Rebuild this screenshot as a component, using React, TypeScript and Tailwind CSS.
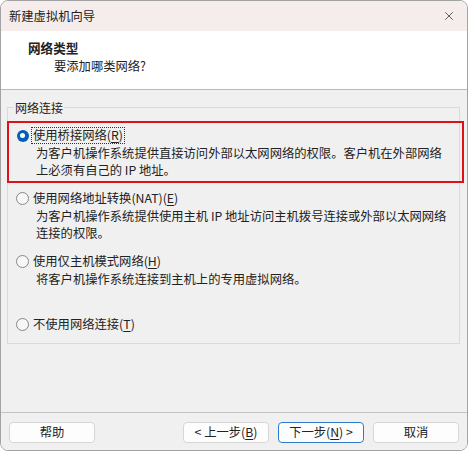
import { X } from "lucide-react";

const font = { fontFamily: '"Noto Sans CJK SC", "Noto Sans", sans-serif' };

type Opt = {
  label: string;
  key: string;
  desc: string[];
  selected?: boolean;
};

const options: Opt[] = [
  {
    label: "使用桥接网络",
    key: "R",
    desc: [
      "为客户机操作系统提供直接访问外部以太网网络的权限。客户机在外部网络",
      "上必须有自己的 IP 地址。",
    ],
    selected: true,
  },
  {
    label: "使用网络地址转换(NAT)",
    key: "E",
    desc: [
      "为客户机操作系统提供使用主机 IP 地址访问主机拨号连接或外部以太网网络",
      "连接的权限。",
    ],
  },
  {
    label: "使用仅主机模式网络",
    key: "H",
    desc: ["将客户机操作系统连接到主机上的专用虚拟网络。"],
  },
  { label: "不使用网络连接", key: "T", desc: [] },
];

function Radio({ on }: { on?: boolean }) {
  if (on) {
    return (
      <span className="flex h-[13px] w-[13px] items-center justify-center">
        <span className="flex h-[12px] w-[12px] items-center justify-center rounded-full bg-[#005fb8]">
          <span className="h-[5px] w-[5px] rounded-full bg-white" />
        </span>
      </span>
    );
  }
  return <span className="h-[13px] w-[13px] rounded-full border border-[#878787] bg-[#f7f7f7]" />;
}

function Option({ opt }: { opt: Opt }) {
  return (
    <div className="h-[63px]">
      <div className="flex h-[17px] items-center">
        <Radio on={opt.selected} />
        <span
          className={`ml-[2px] px-[1px] leading-[15px] ${
            opt.selected ? "border border-dotted border-[#333]" : "border border-transparent"
          }`}
        >
          {opt.label}(<span className="underline underline-offset-2">{opt.key}</span>)
        </span>
      </div>
      <div className="ml-[20px]">
        {opt.desc.map((d) => (
          <div key={d} className="h-[17px] whitespace-nowrap">
            {d}
          </div>
        ))}
      </div>
    </div>
  );
}

function Btn({ children, primary }: { children: React.ReactNode; primary?: boolean }) {
  return (
    <button
      type="button"
      className={`flex h-[21px] w-[86px] items-center justify-center rounded-[4px] bg-[#fdfdfd] text-[12.3px] text-[#222] ${
        primary ? "border border-[#2f7bc8]" : "border border-[#d6d6d6]"
      }`}
    >
      {children}
    </button>
  );
}

export default function App() {
  return (
    <div className="h-[452px] w-[468px] bg-white" style={font}>
      <div className="relative flex h-[451px] w-[468px] flex-col overflow-hidden rounded-[8px] border border-[#a3a3a3] text-[#222]">
        {/* title bar */}
        <div className="flex h-[30px] shrink-0 items-center justify-between bg-[#f5edeb] pl-[8px] pr-[11px]">
          <span className="text-[12.3px]">新建虚拟机向导</span>
          <X className="h-[14px] w-[14px] text-[#333]" strokeWidth={1.3} />
        </div>

        {/* header */}
        <div className="h-[59px] shrink-0 border-b border-[#b9b9b9] bg-white pl-[27px] pt-[8px]">
          <div className="text-[12.6px] font-bold leading-[17px]">网络类型</div>
          <div className="mt-[2px] pl-[26px] text-[12.3px] leading-[17px]">要添加哪类网络?</div>
        </div>

        {/* body */}
        <div className="flex flex-1 flex-col bg-[#f0f0f0]">
          <div className="relative ml-[6px] mt-[17px] h-[237px] w-[453px] border border-[#dadada] pl-[8px] pt-[19px] text-[12.3px]">
            <span className="absolute left-[6px] top-[-9px] bg-[#f0f0f0] px-[1px] text-[12px] leading-[17px]">
              网络连接
            </span>
            {options.map((o) => (
              <Option key={o.key} opt={o} />
            ))}
          </div>

          <div className="mt-auto flex h-[38px] shrink-0 items-start border-t border-[#c4c4c4] px-[8px] pt-[9px]">
            <Btn>帮助</Btn>
            <div className="ml-auto flex gap-[9px]">
              <Btn>
                &lt; 上一步(<span className="underline underline-offset-2">B</span>)
              </Btn>
              <Btn primary>
                下一步(<span className="underline underline-offset-2">N</span>) &gt;
              </Btn>
              <Btn>取消</Btn>
            </div>
          </div>
        </div>

        {/* annotation highlight */}
        <div className="absolute left-[6px] top-[120px] h-[62px] w-[457px] border-2 border-[#e0101a]" />
      </div>
    </div>
  );
}
